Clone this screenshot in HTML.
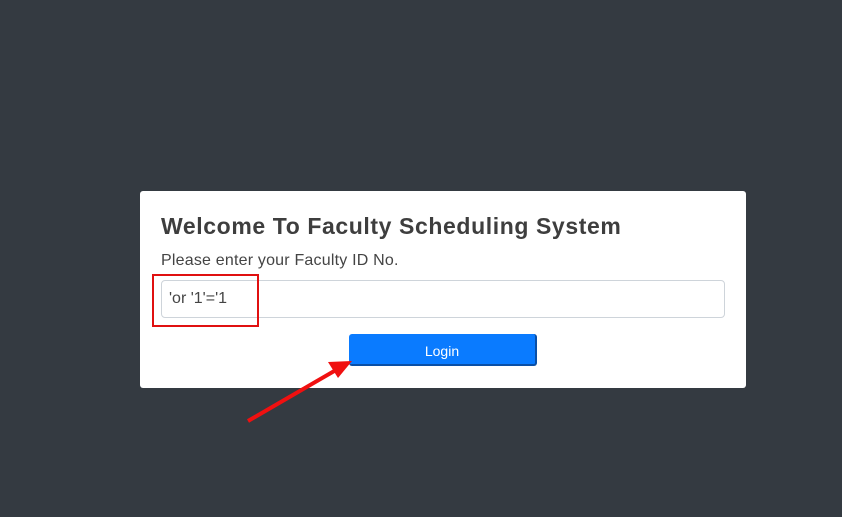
<!DOCTYPE html>
<html><head><style>
body{margin:0;width:842px;height:517px;background:#343a41;font-family:"Liberation Sans",sans-serif;position:relative;overflow:hidden}
.card{position:absolute;left:140px;top:191px;width:606px;height:197px;background:#fff;border-radius:3px}
h1{position:absolute;left:21px;top:22px;margin:0;font-size:23px;font-weight:bold;color:#3e3e3e;letter-spacing:0.6px;white-space:nowrap}
.p{position:absolute;left:21px;top:61px;font-size:16px;color:#444;letter-spacing:0.2px}
.inp{position:absolute;left:21px;top:89px;width:562px;height:36px;border:1px solid #ced4da;border-radius:4px;font-size:16px;color:#444;line-height:36px;text-indent:7px}
.btn{position:absolute;left:209px;top:143px;width:186px;height:30px;background:#0a7bff;border-right:2px solid #0a4fa6;border-bottom:2px solid #0a4fa6;border-radius:3px;color:#fff;font-size:14px;text-align:center;line-height:34px}
.red{position:absolute;left:152px;top:274px;width:103px;height:49px;border:2px solid #e01010}
</style></head><body>
<div class="card">
<h1>Welcome To Faculty Scheduling System</h1>
<div class="p">Please enter your Faculty ID No.</div>
<div class="inp">'or '1'='1</div>
<div class="btn">Login</div>
</div>
<div class="red"></div>
<svg width="842" height="517" style="position:absolute;left:0;top:0">
<line x1="248" y1="421" x2="336" y2="370" stroke="#f01010" stroke-width="4"/>
<polygon points="352,361 328,362 338,378" fill="#f01010"/>
</svg>
</body></html>
